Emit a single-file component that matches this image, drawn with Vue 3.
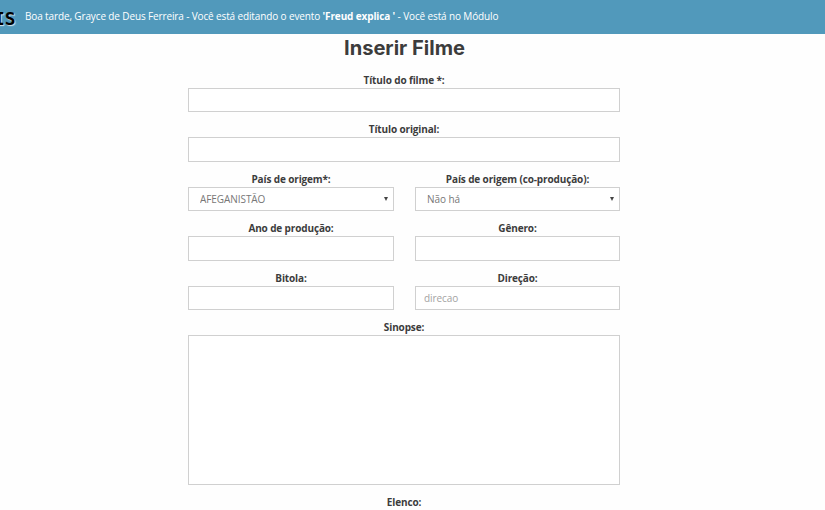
<script setup>
import { ref } from 'vue'

const paises = ['AFEGANISTÃO']
const coProducao = ['Não há']
const form = ref({
  titulo: '', original: '', pais: 'AFEGANISTÃO', co: 'Não há',
  ano: '', genero: '', bitola: '', direcao: '', sinopse: '',
})

const fields = [
  { key: 'titulo', label: 'Título do filme *:', wide: true },
  { key: 'original', label: 'Título original:', wide: true },
  { key: 'pais', label: 'País de origem*:', options: paises },
  { key: 'co', label: 'País de origem (co-produção):', options: coProducao },
  { key: 'ano', label: 'Ano de produção:' },
  { key: 'genero', label: 'Gênero:' },
  { key: 'bitola', label: 'Bitola:' },
  { key: 'direcao', label: 'Direção:', placeholder: 'direcao' },
]
</script>

<template>
  <div class="page">
    <header class="topbar">
      <span class="brand">IS</span>
      <p class="greeting">Boa tarde, Grayce de Deus Ferreira - Você está editando o evento <b>'Freud explica '</b> - Você está no Módulo</p>
    </header>
    <main class="content">
      <h1 class="title">Inserir Filme</h1>
      <form class="grid" @submit.prevent>
        <div v-for="f in fields" :key="f.key" class="field" :class="{ wide: f.wide }">
          <label class="label" :for="f.key">{{ f.label }}</label>
          <div v-if="f.options" class="select-wrap">
            <select :id="f.key" v-model="form[f.key]" class="control select">
              <option v-for="o in f.options" :key="o">{{ o }}</option>
            </select>
            <svg class="arrow" viewBox="0 0 4 5" preserveAspectRatio="none"><path d="M0 0h4L2 5z" /></svg>
          </div>
          <input v-else :id="f.key" v-model="form[f.key]" class="control" type="text" :placeholder="f.placeholder">
        </div>
        <div class="field wide">
          <label class="label" for="sinopse">Sinopse:</label>
          <textarea id="sinopse" v-model="form.sinopse" class="control area"></textarea>
        </div>
        <div class="field wide">
          <span class="label">Elenco:</span>
        </div>
      </form>
    </main>
  </div>
</template>

<style>
body { background: #fefefe; overflow: hidden; }
</style>

<style scoped>
.page {
  height: 510px;
  overflow: hidden;
  font-family: "Open Sans", sans-serif;
  color: #3c3c3c;
}
.topbar {
  display: flex;
  align-items: center;
  height: 34px;
  background: #5199bb;
  color: #fff;
}
.brand {
  flex: none;
  width: 25px;
  margin-left: -6px;
  padding-top: 3px;
  box-sizing: border-box;
  font: bold 17px/20px "DejaVu Sans Mono", monospace;
  color: #000;
  text-shadow: 1px 1px 1px #d5e5ed;
  transform: scaleX(1.05);
  transform-origin: 0 50%;
}
.greeting {
  margin: 0 0 1px 6px;
  font-size: 10px;
  line-height: 15px;
  letter-spacing: -0.13px;
  white-space: nowrap;
}
.content {
  width: 432px;
  margin-left: 188px;
}
.title {
  margin: 0;
  padding-left: 1px;
  height: 37.2px;
  font: 700 19.5px/28px Inter, sans-serif;
  text-align: center;
  transform: scaleX(1.03);
}
.grid {
  display: grid;
  grid-template-columns: 206px 205px;
  column-gap: 21px;
  row-gap: 8.5px;
}
.wide { grid-column: 1 / -1; }
.field {
  display: flex;
  flex-direction: column;
}
.label {
  box-sizing: border-box;
  height: 16.5px;
  padding-top: 0.35px;
  font-size: 10px;
  line-height: 16.6px;
  font-weight: 700;
  letter-spacing: -0.13px;
  text-align: center;
}
.control {
  display: block;
  box-sizing: border-box;
  width: 100%;
  height: 24.5px;
  margin: 0;
  padding: 0 8px;
  border: 1px solid #d0d0d0;
  border-radius: 0;
  background: #fff;
  color: #777;
  font: 10px/16px "Open Sans", sans-serif;
  letter-spacing: -0.07px;
  outline: none;
}
.control::placeholder { color: #a3a3a3; opacity: 1; }
.select-wrap {
  display: grid;
  align-items: center;
}
.select-wrap > * { grid-area: 1 / 1; }
.select {
  appearance: none;
  padding: 0 11px;
}
.arrow {
  justify-self: end;
  width: 4px;
  height: 4px;
  margin-right: 6px;
  fill: #444;
  pointer-events: none;
}
.area {
  height: 150px;
  resize: none;
}
</style>
